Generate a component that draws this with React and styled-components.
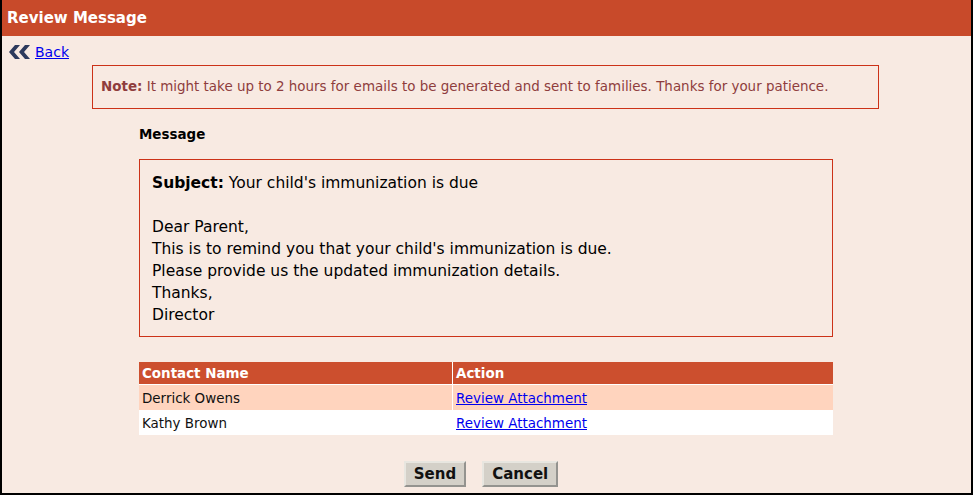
import React from 'react'
import styled, { createGlobalStyle } from 'styled-components'

const GlobalStyle = createGlobalStyle`
  html, body {
    margin: 0;
    padding: 0;
    background: #000;
  }
  body {
    font-family: 'DejaVu Sans', Verdana, sans-serif;
  }
`

const rows = [
  { name: 'Derrick Owens', tone: 'odd' },
  { name: 'Kathy Brown', tone: 'even' },
]

function App() {
  return (
    <>
      <GlobalStyle />
      <Frame>
        <Header>Review Message</Header>
        <Body>
          <BackRow>
            <svg width="21" height="14" viewBox="0 0 21 14">
              <path d="M6 0 L11 0 L5 7 L11 14 L6 14 L0 7 Z" fill="#2d3a5c" />
              <path d="M16 0 L21 0 L15 7 L21 14 L16 14 L10 7 Z" fill="#2d3a5c" />
            </svg>
            <LinkText href="#">Back</LinkText>
          </BackRow>
          <Note>
            <b>Note:</b> It might take up to 2 hours for emails to be generated and sent to families. Thanks for your patience.
          </Note>
          <Content>
            <SectionLabel>Message</SectionLabel>
            <MessageBox>
              <Line>
                <b>Subject:</b> Your child's immunization is due
              </Line>
              <Line>&nbsp;</Line>
              <Line>Dear Parent,</Line>
              <Line>This is to remind you that your child's immunization is due.</Line>
              <Line>Please provide us the updated immunization details.</Line>
              <Line>Thanks,</Line>
              <Line>Director</Line>
            </MessageBox>
            <Table>
              <thead>
                <tr>
                  <Th style={{ width: 307 }}>Contact Name</Th>
                  <Th>Action</Th>
                </tr>
              </thead>
              <tbody>
                {rows.map((r) => (
                  <Tr key={r.name} $tone={r.tone}>
                    <Td>{r.name}</Td>
                    <Td>
                      <LinkText href="#">Review Attachment</LinkText>
                    </Td>
                  </Tr>
                ))}
              </tbody>
            </Table>
          </Content>
          <Buttons>
            <Button>Send</Button>
            <Button>Cancel</Button>
          </Buttons>
        </Body>
      </Frame>
    </>
  )
}

export default App

const Frame = styled.div`
  width: 969px;
  height: 493px;
  border: 2px solid #000;
  border-top: 0;
  background: #f8eae2;
  display: flex;
  flex-direction: column;
  overflow: hidden;
`

const Header = styled.div`
  height: 36px;
  background: #c84a2a;
  color: #fff;
  font-weight: bold;
  font-size: 15px;
  line-height: 36px;
  padding-left: 5px;
`

const Body = styled.div`
  display: flex;
  flex-direction: column;
  padding: 8px 0 0 7px;
`

const BackRow = styled.div`
  display: flex;
  align-items: center;
  gap: 5px;
  height: 16px;
  font-size: 14px;
`

const LinkText = styled.a`
  color: #0000ee;
  text-decoration: underline;
`

const Note = styled.div`
  margin: 5px 0 0 83px;
  width: 777px;
  height: 42px;
  border: 1px solid #cc3218;
  padding-left: 8px;
  font-size: 13.45px;
  line-height: 42px;
  color: #8f3d3d;
  white-space: nowrap;
`

const Content = styled.div`
  margin-left: 130px;
  width: 694px;
  display: flex;
  flex-direction: column;
`

const SectionLabel = styled.div`
  font-size: 13.45px;
  font-weight: bold;
  color: #000;
  margin-top: 18px;
  line-height: 16px;
`

const MessageBox = styled.div`
  box-sizing: border-box;
  margin-top: 16px;
  border: 1px solid #cc3218;
  height: 178px;
  padding: 12px 12px 0 12px;
  font-size: 15.5px;
  color: #000;
`

const Line = styled.div`
  line-height: 22px;
`

const Table = styled.table`
  margin-top: 25px;
  border-collapse: collapse;
  width: 694px;
  font-size: 13.45px;
`

const Th = styled.th`
  background: #cc4f2e;
  color: #fff;
  text-align: left;
  font-weight: bold;
  height: 22px;
  padding: 0 3px;
  border: 1px solid #fff;
  border-top: 0;
  border-left: 0;
  &:last-child {
    border-right: 0;
  }
`

const Tr = styled.tr`
  background: ${(p) => (p.$tone === 'odd' ? '#ffd4be' : '#fff')};
`

const Td = styled.td`
  height: 24px;
  padding: 1px 3px 0 3px;
  color: #111;
  border-right: 1px solid #fff;
  &:last-child {
    border-right: 0;
  }
`

const Buttons = styled.div`
  display: flex;
  justify-content: center;
  gap: 16px;
  margin-top: 26px;
  padding-right: 18px;
`

const Button = styled.button`
  font-family: 'DejaVu Sans', Verdana, sans-serif;
  font-size: 15px;
  font-weight: bold;
  color: #111;
  background: #d4d0c8;
  border: 2px outset #e8e6e0;
  height: 26px;
  padding: 0 8px;
`
